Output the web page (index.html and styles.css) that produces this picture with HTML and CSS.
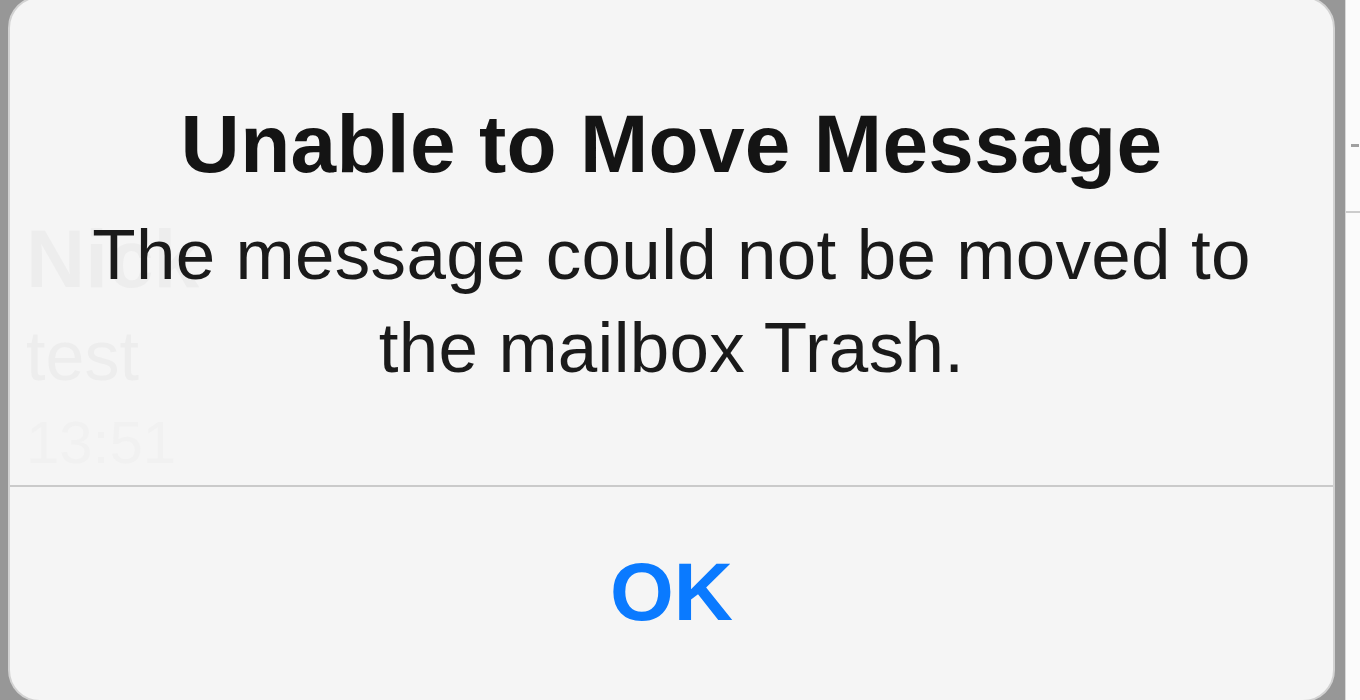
FILE: index.html
```html
<!DOCTYPE html>
<html lang="en">
<head>
    <meta charset="UTF-8">
    <meta name="viewport" content="width=device-width, initial-scale=1.0">
    <title>Unable to Move Message</title>
    <link rel="stylesheet" href="styles.css">
</head>
<body>

<div class="screen">
    <div class="dim dim-left"></div>

    <div class="alert">
        <!-- list row of the mail app, seen through the alert -->
        <div class="behind">
            <div class="behind-name">Nick</div>
            <div class="behind-subject">test</div>
            <div class="behind-body">13:51</div>
        </div>

        <div class="alert-content">
            <h2 class="alert-title">Unable to Move Message</h2>
            <p class="alert-message">The message could not be moved to<br>the mailbox Trash.</p>
        </div>
        <button class="alert-button" type="button">OK</button>
    </div>

    <div class="dim dim-right"></div>
    <div class="peek">
        <span class="peek-dash"></span>
    </div>
</div>

</body>
</html>
```

FILE: styles.css
```css
body {
    margin: 0;
    background-color: #979797;
    font-family: 'Liberation Sans', Arial, sans-serif;
    overflow: hidden;
}

.screen {
    display: flex;
    height: 700px;
}

.dim {
    background-color: #979797;
}

.dim-left {
    width: 8px;
}

.dim-right {
    width: 10px;
}

.alert {
    position: relative;
    width: 1327px;
    height: 706px;
    margin-top: -4px;
    display: flex;
    flex-direction: column;
    background-color: #f5f5f5;
    border: 2px solid #d2d2d2;
    border-radius: 32px;
    box-sizing: border-box;
    overflow: hidden;
}

/* faint content under the translucent alert */
.behind {
    position: absolute;
    left: 16px;
    top: 216px;
    color: #ededed;
}

.behind-name {
    font-size: 82px;
    font-weight: bold;
    line-height: 90px;
}

.behind-subject {
    font-size: 70px;
    line-height: 104px;
}

.behind-body {
    font-size: 60px;
    line-height: 70px;
    color: #f1f1f1;
}

.alert-content {
    position: relative;
    padding: 98px 20px 91px;
    border-bottom: 2px solid #cacaca;
    text-align: center;
}

.alert-title {
    margin: 0;
    font-size: 82px;
    line-height: 96px;
    font-weight: bold;
    color: #141414;
    letter-spacing: 0.3px;
}

.alert-message {
    margin: 16px 0 0;
    font-size: 71px;
    line-height: 93px;
    color: #1a1a1a;
    letter-spacing: 0.3px;
}

.alert-button {
    position: relative;
    padding: 57px 0 0;
    border: none;
    background: none;
    font-family: inherit;
    font-size: 82px;
    line-height: 96px;
    font-weight: bold;
    color: #0a7aff;
    text-align: center;
    cursor: pointer;
}

.peek {
    position: relative;
    flex: 1;
    background-color: #fbfbfb;
    border-left: 1px solid #d8d8d8;
}

.peek::after {
    content: "";
    position: absolute;
    left: 0;
    right: 0;
    top: 211px;
    border-top: 2px solid #cccccc;
}

.peek-dash {
    position: absolute;
    left: 5px;
    top: 144px;
    width: 8px;
    height: 3px;
    background-color: #a0a0a0;
}
```
